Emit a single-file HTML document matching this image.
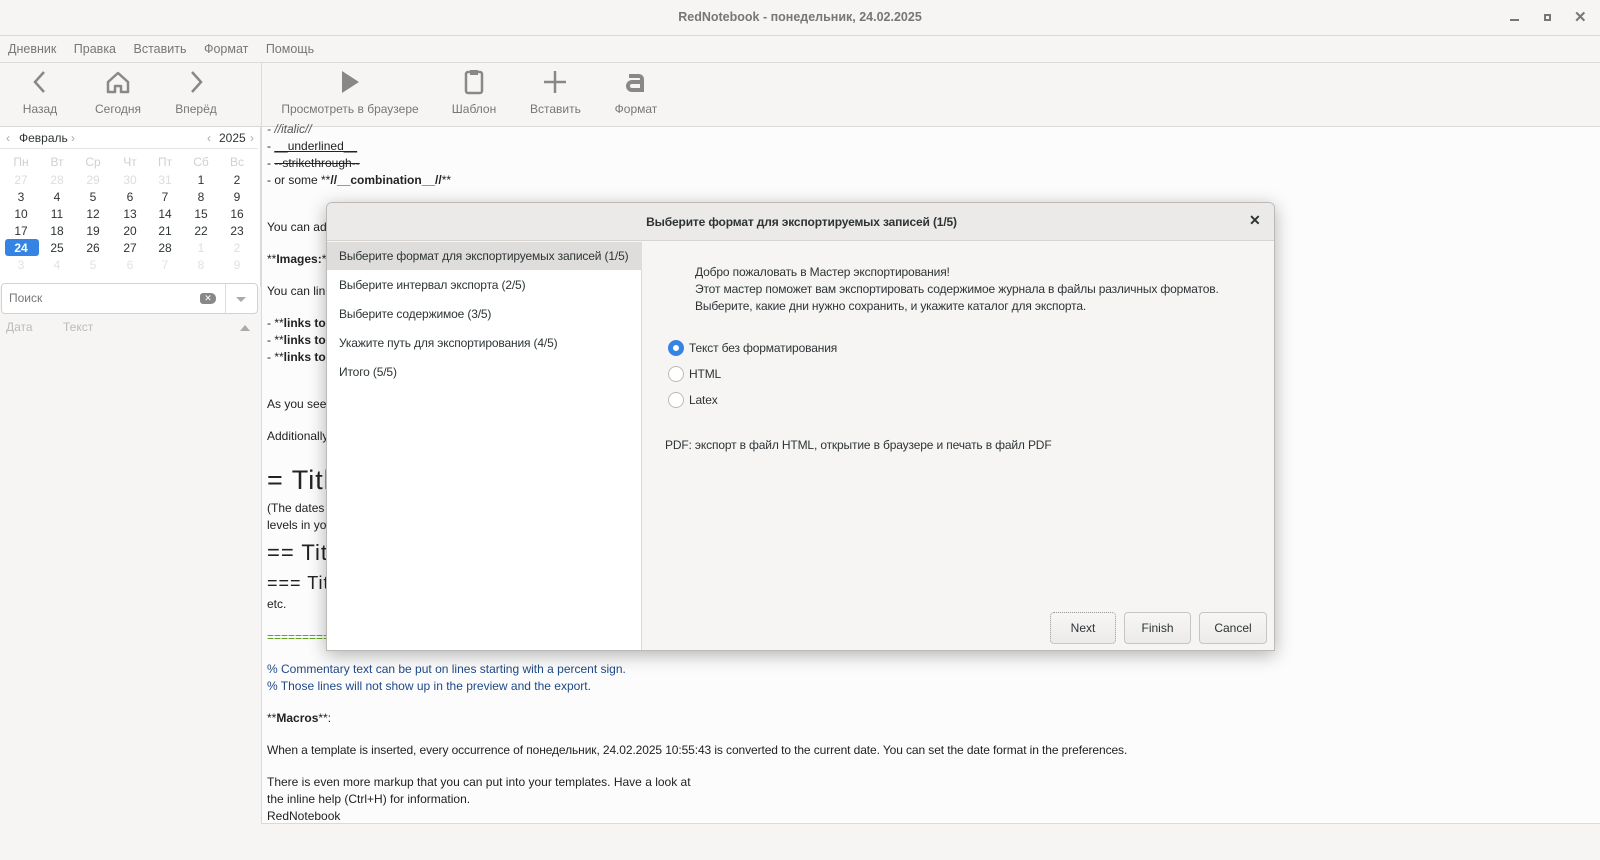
<!DOCTYPE html>
<html><head><meta charset="utf-8"><style>
*{margin:0;padding:0;box-sizing:border-box}
body{width:1600px;height:860px;position:relative;overflow:hidden;background:#f6f5f4;font-family:"Liberation Sans","Noto Sans CJK SC",sans-serif;font-size:12px;color:#2e3436}
.a{position:absolute;white-space:nowrap}
.g{color:#8a8a8a}
.cal span{position:absolute;width:30px;text-align:center;margin-left:-15px}
.ed div{position:absolute;left:267px;white-space:nowrap}
.tb{position:absolute;top:68px;text-align:center;color:#777;font-size:12px}
.tb svg{display:block;margin:0 auto 6px}
.btn{position:absolute;top:612px;height:32px;border:1px solid #c8c5c1;border-radius:4px;background:linear-gradient(#f7f6f5,#ecebe9);text-align:center;line-height:30px;font-size:12px}
.rad{position:absolute;left:668px;width:16px;height:16px;border-radius:50%;border:1px solid #bcbab7;background:#fff}
.dl{letter-spacing:-0.15px}
</style></head><body>
<!-- titlebar -->
<div class="a" style="left:0;top:0;width:1600px;height:36px;background:#f6f5f4;border-bottom:1px solid #dcdad7"></div>
<div class="a" style="left:0;width:1600px;top:10px;text-align:center;font-weight:bold;color:#777;font-size:12.5px">RedNotebook - понедельник, 24.02.2025</div>
<div class="a" style="left:1510px;top:19px;width:9px;height:2px;background:#777"></div>
<div class="a" style="left:1544px;top:14px;width:7px;height:7px;border:2px solid #777"></div>
<div class="a" style="left:1574px;top:8px;font-size:15px;color:#777;font-weight:bold">✕</div>
<!-- menu -->
<div class="a g" style="left:8px;top:42px;font-size:12.5px;word-spacing:14px;color:#777">Дневник Правка Вставить Формат Помощь</div>
<div class="a" style="left:0;top:62px;width:1600px;height:1px;background:#dcdad7"></div>
<!-- toolbar -->
<div class="tb" style="left:20px;width:40px"><svg width="24" height="28" viewBox="0 0 24 28"><path d="M16 4L7 14l9 10" stroke="#888" stroke-width="2.5" fill="none"/></svg>Назад</div>
<div class="tb" style="left:88px;width:60px"><svg width="28" height="28" viewBox="0 0 28 28"><path d="M4 14L14 5l10 9v10h-7v-6h-6v6H4z" stroke="#888" stroke-width="2.5" fill="none" stroke-linejoin="round"/></svg>Сегодня</div>
<div class="tb" style="left:172px;width:48px"><svg width="24" height="28" viewBox="0 0 24 28"><path d="M8 4l9 10-9 10" stroke="#888" stroke-width="2.5" fill="none"/></svg>Вперёд</div>
<div class="a" style="left:261px;top:62px;width:1px;height:64px;background:#dcdad7"></div>
<div class="tb" style="left:280px;width:140px"><svg width="24" height="28" viewBox="0 0 24 28"><path d="M4 3l17 11L4 25z" fill="#888"/></svg>Просмотреть в браузере</div>
<div class="tb" style="left:450px;width:48px"><svg width="24" height="28" viewBox="0 0 24 28"><rect x="4" y="4" width="16" height="21" rx="2" stroke="#888" stroke-width="2.5" fill="none"/><rect x="8" y="2" width="8" height="5" fill="#888"/></svg>Шаблон</div>
<div class="tb" style="left:530px;width:50px"><svg width="28" height="28" viewBox="0 0 28 28"><path d="M14 3v22M3 14h22" stroke="#888" stroke-width="2.5"/></svg>Вставить</div>
<div class="tb" style="left:612px;width:48px"><svg width="24" height="28" viewBox="0 0 24 28"><path d="M5 8h10a3 3 0 0 1 3 3v11H8a4 4 0 0 1 0-8h10" stroke="#888" stroke-width="4" fill="none"/></svg>Формат</div>
<div class="a" style="left:0;top:126px;width:1600px;height:1px;background:#dcdad7"></div>
<!-- calendar -->
<div class="a" style="left:0;top:127px;width:261px;height:160px;background:#fff;border-right:1px solid #dcdad7"></div>
<div class="a" style="left:0;top:127px;width:258px;height:22px;border-bottom:1px solid #e6e4e2"></div>
<div class="a" style="left:6px;top:131px;color:#aaa">‹</div><div class="a" style="left:19px;top:131px">Февраль</div><div class="a" style="left:71px;top:131px;color:#aaa">›</div>
<div class="a" style="left:207px;top:131px;color:#aaa">‹</div><div class="a" style="left:219px;top:131px">2025</div><div class="a" style="left:250px;top:131px;color:#aaa">›</div>
<div class="a" style="left:5px;top:239px;width:34px;height:17px;background:#3584e4;border-radius:3px"></div>
<div class="cal">
<div class="a" style="left:0;top:155px;color:#d0d0d0;width:260px;height:14px"><span style="left:21px">Пн</span><span style="left:57px">Вт</span><span style="left:93px">Ср</span><span style="left:130px">Чт</span><span style="left:165px">Пт</span><span style="left:201px">Сб</span><span style="left:237px">Вс</span></div>
<div class="a" style="left:0;top:173px;width:260px;height:14px"><span style="left:21px;color:#ddd">27</span><span style="left:57px;color:#ddd">28</span><span style="left:93px;color:#ddd">29</span><span style="left:130px;color:#ddd">30</span><span style="left:165px;color:#ddd">31</span><span style="left:201px">1</span><span style="left:237px">2</span></div>
<div class="a" style="left:0;top:190px;width:260px;height:14px"><span style="left:21px">3</span><span style="left:57px">4</span><span style="left:93px">5</span><span style="left:130px">6</span><span style="left:165px">7</span><span style="left:201px">8</span><span style="left:237px">9</span></div>
<div class="a" style="left:0;top:207px;width:260px;height:14px"><span style="left:21px">10</span><span style="left:57px">11</span><span style="left:93px">12</span><span style="left:130px">13</span><span style="left:165px">14</span><span style="left:201px">15</span><span style="left:237px">16</span></div>
<div class="a" style="left:0;top:224px;width:260px;height:14px"><span style="left:21px">17</span><span style="left:57px">18</span><span style="left:93px">19</span><span style="left:130px">20</span><span style="left:165px">21</span><span style="left:201px">22</span><span style="left:237px">23</span></div>
<div class="a" style="left:0;top:241px;width:260px;height:14px"><span style="left:21px;color:#fff;font-weight:bold">24</span><span style="left:57px">25</span><span style="left:93px">26</span><span style="left:130px">27</span><span style="left:165px">28</span><span style="left:201px;color:#ddd">1</span><span style="left:237px;color:#ddd">2</span></div>
<div class="a" style="left:0;top:258px;width:260px;height:14px;color:#e2e2e2"><span style="left:21px">3</span><span style="left:57px">4</span><span style="left:93px">5</span><span style="left:130px">6</span><span style="left:165px">7</span><span style="left:201px">8</span><span style="left:237px">9</span></div>
</div>
<!-- search -->
<div class="a" style="left:1px;top:283px;width:257px;height:31px;background:#fff;border:1px solid #d4d2cf;border-radius:4px"></div>
<div class="a" style="left:225px;top:284px;width:1px;height:29px;background:#ddd"></div>
<div class="a" style="left:9px;top:291px;color:#777">Поиск</div>
<div class="a" style="left:200px;top:293px;width:16px;height:11px;background:#888;border-radius:3px 5px 5px 3px;color:#fff;font-size:9px;text-align:center;line-height:11px">✕</div>
<div class="a" style="left:236px;top:297px;border:5px solid transparent;border-top:5px solid #aaa"></div>
<div class="a" style="left:6px;top:320px;color:#bbb">Дата</div><div class="a" style="left:63px;top:320px;color:#bbb">Текст</div>
<div class="a" style="left:240px;top:320px;border:5px solid transparent;border-bottom:6px solid #aaa"></div>
<!-- editor -->
<div class="a" style="left:261px;top:127px;width:1339px;height:697px;background:#fcfcfc;border-left:1px solid #dcdad7;border-bottom:1px solid #dcdad7"></div>
<div class="ed" style="font-size:12px;color:#222">
<div style="top:122px;font-style:italic;color:#555">- //italic//</div>
<div style="top:139px">- <u>__underlined__</u></div>
<div style="top:156px">- <s>--strikethrough--</s></div>
<div style="top:173px">- or some **<b>//__combination__//</b>**</div>
<div style="top:220px">You can add images to your entries.</div>
<div style="top:252px">**<b>Images:</b>**</div>
<div style="top:284px">You can link to files and websites.</div>
<div style="top:316px">- **<b>links to files</b>**</div>
<div style="top:333px">- **<b>links to directories</b>**</div>
<div style="top:350px">- **<b>links to websites</b>**</div>
<div style="top:397px">As you see, the markup is simple.</div>
<div style="top:429px">Additionally, you can add titles.</div>
<div style="top:465px;font-size:27px;letter-spacing:1px">= Title =</div>
<div style="top:501px">(The dates in the export will be level one titles, so use lower</div>
<div style="top:518px">levels in your entries.)</div>
<div style="top:540px;font-size:22px;letter-spacing:1px">== Title ==</div>
<div style="top:573px;font-size:18px;letter-spacing:1px">=== Title ===</div>
<div style="top:597px">etc.</div>
<div style="top:630px;color:#4e9a06">====================</div>
<div style="top:662px;color:#204a87">% Commentary text can be put on lines starting with a percent sign.</div>
<div style="top:679px;color:#204a87">% Those lines will not show up in the preview and the export.</div>
<div style="top:711px">**<b>Macros</b>**:</div>
<div style="top:743px;letter-spacing:-0.1px">When a template is inserted, every occurrence of понедельник, 24.02.2025 10:55:43 is converted to the current date. You can set the date format in the preferences.</div>
<div style="top:775px">There is even more markup that you can put into your templates. Have a look at</div>
<div style="top:792px">the inline help (Ctrl+H) for information.</div>
<div style="top:809px">RedNotebook</div>
</div>
<!-- dialog -->
<div class="a dl" style="left:326px;top:202px;width:949px;height:449px;background:#f6f5f4;border:1px solid #bdbab6;border-radius:6px 6px 0 0;box-shadow:0 4px 18px rgba(0,0,0,.3);overflow:hidden">
 <div class="a" style="left:0;top:0;width:949px;height:38px;background:#ebeae8;border-bottom:1px solid #d6d4d1"></div>
 <div class="a" style="left:0;top:12px;width:949px;text-align:center;font-weight:bold;font-size:12px">Выберите формат для экспортируемых записей (1/5)</div>
 <div class="a" style="left:922px;top:9px;font-size:14px;font-weight:bold">✕</div>
 <div class="a" style="left:0;top:39px;width:315px;height:410px;background:#fff;border-right:1px solid #dcdad7"></div>
 <div class="a" style="left:0;top:39px;width:315px;height:28px;background:#dedddb"></div>
 <div class="a" style="left:12px;top:46px">Выберите формат для экспортируемых записей (1/5)</div>
 <div class="a" style="left:12px;top:75px">Выберите интервал экспорта (2/5)</div>
 <div class="a" style="left:12px;top:104px">Выберите содержимое (3/5)</div>
 <div class="a" style="left:12px;top:133px">Укажите путь для экспортирования (4/5)</div>
 <div class="a" style="left:12px;top:162px">Итого (5/5)</div>
 <div class="a" style="left:368px;top:61px;line-height:17px">Добро пожаловать в Мастер экспортирования!<br>Этот мастер поможет вам экспортировать содержимое журнала в файлы различных форматов.<br>Выберите, какие дни нужно сохранить, и укажите каталог для экспорта.</div>
 <div class="a" style="left:362px;top:138px">Текст без форматирования</div>
 <div class="a" style="left:362px;top:164px">HTML</div>
 <div class="a" style="left:362px;top:190px">Latex</div>
 <div class="a" style="left:338px;top:235px">PDF: экспорт в файл HTML, открытие в браузере и печать в файл PDF</div>
</div>
<div class="rad" style="top:340px;border:5px solid #3584e4"></div>
<div class="rad" style="top:366px"></div>
<div class="rad" style="top:392px"></div>
<div class="btn" style="left:1050px;width:66px;border-style:dotted;border-color:#999">Next</div>
<div class="btn" style="left:1124px;width:67px">Finish</div>
<div class="btn" style="left:1199px;width:68px">Cancel</div>
</body></html>
